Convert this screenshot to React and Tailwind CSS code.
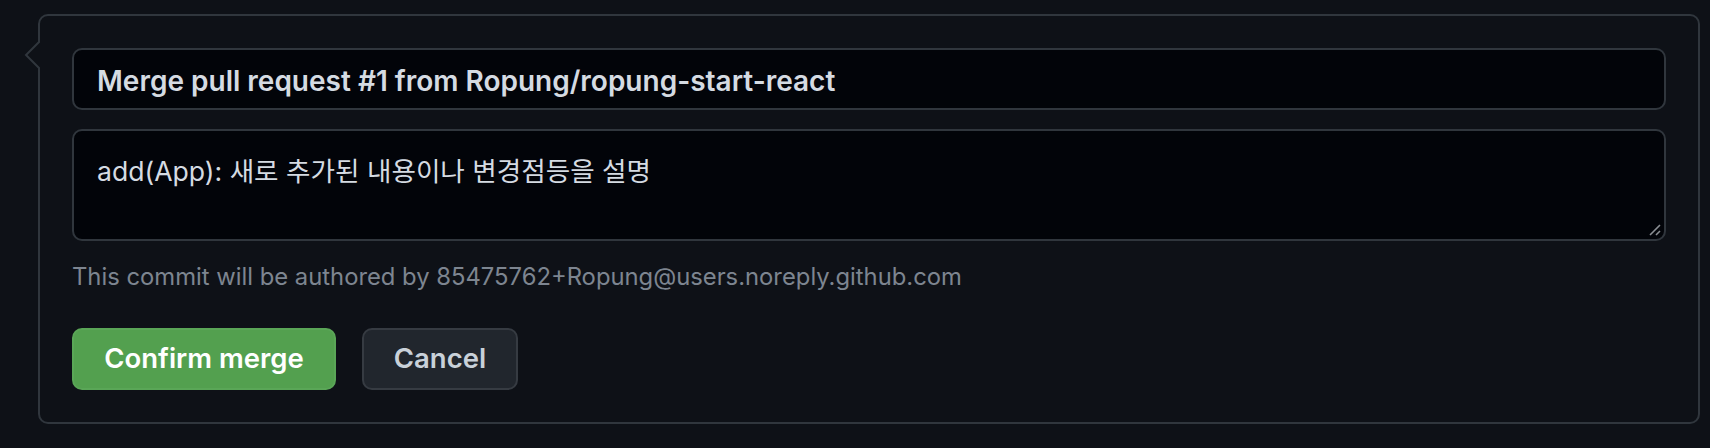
import React from 'react';

const font = { fontFamily: 'Inter, "Noto Sans CJK KR", sans-serif' };

export default function App() {
  return (
    <div className="w-[1710px] h-[448px] bg-[#0e1117] pt-[14px] pl-[38px]" style={font}>
      <div className="relative w-[1662px] h-[410px] rounded-[10px] border-2 border-[#30363d] bg-[#0e1117] p-[32px]">
        {/* caret */}
        <svg className="absolute left-[-16px] top-[24px]" width="16" height="30" viewBox="0 0 16 30">
          <path d="M16 1 L2 15 L16 29" fill="#0e1117" stroke="#30363d" strokeWidth="2" />
        </svg>

        {/* title */}
        <div className="h-[62px] rounded-[10px] border-2 border-[#30363d] bg-[#020409] pl-[23px] pt-[4px] flex items-center text-[28px] font-semibold text-[#d5dbe2]">
          Merge pull request #1 from Ropung/ropung-start-react
        </div>

        {/* message */}
        <div className="relative mt-[19px] h-[112px] rounded-[10px] border-2 border-[#30363d] bg-[#020409] pl-[23px] pt-[22px] text-[26.6px] leading-[36px] text-[#d5dbe2]">
          add(App): 새로 추가된 내용이나 변경점등을 설명
          <svg className="absolute right-[3px] bottom-[3px]" width="12" height="12" viewBox="0 0 12 12">
            <path d="M1 11 L11 1 M7 11 L11 7" stroke="#8b8f94" strokeWidth="1.6" />
          </svg>
        </div>

        <p className="mt-[20px] text-[23.8px] leading-[32px] text-[#7d8590]">
          This commit will be authored by 85475762+Ropung@users.noreply.github.com
        </p>

        <div className="mt-[35px] flex gap-[26px]">
          <button className="w-[264px] h-[62px] rounded-[10px] border-2 border-[#5aa657] bg-[#53a04f] text-[27.5px] font-semibold text-white">
            Confirm merge
          </button>
          <button className="w-[156px] h-[62px] rounded-[10px] border-2 border-[#363b42] bg-[#21262d] text-[27.5px] font-semibold text-[#c9d1d9]">
            Cancel
          </button>
        </div>
      </div>
    </div>
  );
}
